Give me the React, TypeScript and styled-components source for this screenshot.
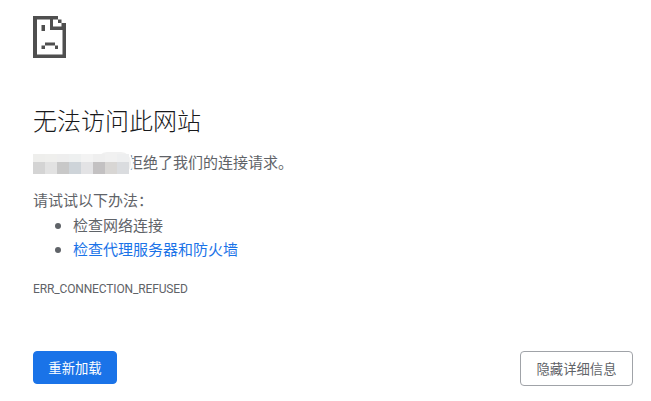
import React from "react";
import styled, { createGlobalStyle } from "styled-components";

const GlobalStyle = createGlobalStyle`
  html, body {
    margin: 0;
    padding: 0;
    background: #fff;
  }
  body {
    font-family: "Noto Sans CJK SC", "Liberation Sans", sans-serif;
  }
`;

const Page = styled.div`
  width: 651px;
  height: 401px;
  box-sizing: border-box;
  padding: 16px 18px 15px 33px;
  display: flex;
  flex-direction: column;
  overflow: hidden;
`;

const SadPage = styled.svg`
  display: block;
  width: 33px;
  height: 42px;
  flex: none;
`;

const Title = styled.h1`
  margin: 46px 0 0;
  font-size: 24px;
  line-height: 32px;
  font-weight: 300;
  color: #18191b;
`;

const Reason = styled.div`
  position: relative;
  margin-top: 14px;
  padding-left: 95px;
  height: 24px;
  line-height: 24px;
  font-size: 15px;
  color: #5f6368;
`;

const Mosaic = styled.div`
  position: absolute;
  left: 0;
  top: 4px;
  display: grid;
  grid-template-columns: repeat(8, 12px);
  grid-template-rows: 8px 12px;

  &::before {
    content: "";
    position: absolute;
    left: 64px;
    top: -2px;
    width: 34px;
    height: 22px;
    border-radius: 10px;
    background: #f1f1f1;
    box-shadow: 2px 0 1px #fff;
  }
`;

const MosaicCell = styled.div<{ $shade: string }>`
  position: relative;
  background: ${(p) => p.$shade};
`;

const Hint = styled.div`
  margin-top: 16px;
  font-size: 15px;
  line-height: 20px;
  color: #5f6368;
`;

const Steps = styled.ul`
  margin: 3px 0 0;
  padding: 0 0 0 40px;
  font-size: 15px;
  color: #5f6368;
`;

const Step = styled.li`
  line-height: 24px;
`;

const StepLink = styled.a`
  color: #1a73e8;
  text-decoration: none;
`;

const ErrorCode = styled.div`
  margin-top: 20px;
  font-family: Roboto, "Liberation Sans", sans-serif;
  font-size: 12px;
  line-height: 16px;
  letter-spacing: -0.14px;
  color: #5f6368;
`;

const Buttons = styled.div`
  margin-top: auto;
  display: flex;
  justify-content: space-between;
  align-items: flex-start;
`;

const Button = styled.button<{ $primary?: boolean }>`
  width: ${(p) => (p.$primary ? "84px" : "113px")};
  height: ${(p) => (p.$primary ? "33px" : "35px")};
  padding: 0;
  border-radius: 4px;
  font-family: inherit;
  font-size: 13.33px;
  cursor: pointer;
  background: ${(p) => (p.$primary ? "#1a73e8" : "#fff")};
  color: ${(p) => (p.$primary ? "#fff" : "#5f6368")};
  border: 1px solid ${(p) => (p.$primary ? "#1a73e8" : "#a0a3a8")};
`;

const shades = [
  "#eeeeec", "#efefed", "#eeeeee", "#eef0f0", "#f3f3f3", "#efefef", "#f1f1f1", "#eeeff0",
  "#d4d4d4", "#e2e2e2", "#c8c8c8", "#ced4d9", "#e3e3e5", "#c3c1c2", "#d8d6d4", "#dadcdf",
];

export default function App() {
  return (
    <>
      <GlobalStyle />
      <Page>
        <SadPage viewBox="0 0 33 42" aria-hidden="true">
          <path
            fill="#4f4f4f"
            fillRule="evenodd"
            d="M0 0H25V3.5H28.5V7H33V42H0ZM4 3.5V38.5H29.5V14H17V3.5ZM20 3.5V10.5H28.5V7H25V3.5ZM8.5 9H12V15H8.5ZM12 26.5H22V29.5H25V33H22V29.5H12V33H8.5V29.5H12Z"
          />
        </SadPage>
        <Title>无法访问此网站</Title>
        <Reason>
          拒绝了我们的连接请求。
          <Mosaic>
            {shades.map((shade, i) => (
              <MosaicCell key={i} $shade={shade} />
            ))}
          </Mosaic>
        </Reason>
        <Hint>请试试以下办法：</Hint>
        <Steps>
          <Step>检查网络连接</Step>
          <Step>
            <StepLink href="#">检查代理服务器和防火墙</StepLink>
          </Step>
        </Steps>
        <ErrorCode>ERR_CONNECTION_REFUSED</ErrorCode>
        <Buttons>
          <Button $primary>重新加载</Button>
          <Button>隐藏详细信息</Button>
        </Buttons>
      </Page>
    </>
  );
}
